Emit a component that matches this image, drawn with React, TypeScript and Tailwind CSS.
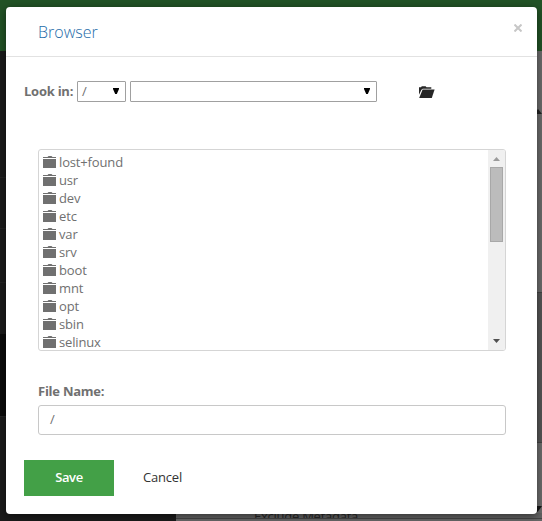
const folders = ['lost+found', 'usr', 'dev', 'etc', 'var', 'srv', 'boot', 'mnt', 'opt', 'sbin', 'selinux'];

function FolderIcon() {
  return (
    <svg className="mr-[3px] h-[12px] w-[13px] shrink-0" viewBox="0 0 13 12" fill="#707070">
      <path d="M0 2V1h4.5L5.5 0h3l1 1H13v1z" />
      <path d="M0 3h13v9H0z" />
    </svg>
  );
}

function OpenFolderIcon() {
  return (
    <svg className="h-[12px] w-[17px]" viewBox="0 0 17 12" fill="#262626">
      <path d="M1 8.8V1.3h2L3.8.3h3.8l.9 1h4.8v1.4H4.8L3.4 3.8z" />
      <path d="M4.6 3.4h12L13.8 12H1.2z" />
    </svg>
  );
}

function Caret({ className }: { className: string }) {
  return (
    <svg className={className} viewBox="0 0 6 6" fill="#000">
      <path d="M0 0h6v1L3.8 6H2.2L0 1z" />
    </svg>
  );
}

function PageBehind() {
  return (
    <div className="flex h-full flex-col">
      <div className="h-[51px] shrink-0 bg-[#225326]" />
      <div className="flex min-h-0 flex-1">
        <div className="flex w-[176px] flex-col bg-[#1b1b1b]">
          <div className="h-[127px] border-b border-[#242424]" />
          <div className="h-[51px] border-b border-[#242424]" />
          <div className="h-[54px] border-b border-[#242424]" />
          <div className="h-[51px]" />
          <div className="h-[83px] border-b border-[#242424] bg-[#0b0b0b]" />
        </div>
        <div className="flex flex-1 flex-col bg-[#6c6c6c]">
          <div className="flex h-[242px] items-start justify-end border-b border-[#444] pt-[57px]">
            <svg className="h-[6px] w-[8px]" viewBox="0 0 8 6" fill="#222">
              <path d="M0 6L4 1l4 5z" />
            </svg>
          </div>
          <div className="h-[150px] border-b border-[#444] bg-[#555]" />
          <div className="flex flex-1 items-end justify-end pb-[1px]">
            <svg className="h-[6px] w-[9px]" viewBox="0 0 9 6" fill="#161616">
              <path d="M0 0h9L4.5 6z" />
            </svg>
          </div>
          <div className="relative h-[6px] shrink-0 overflow-hidden border-b border-[#454545] bg-[#626262]">
            <span className="absolute left-[78px] top-[-4px] whitespace-nowrap text-[13px] leading-[15px] tracking-[-0.25px] text-[#262626]">Exclude Metadata</span>
          </div>
          <div className="h-[2px] shrink-0 bg-[#686868]" />
        </div>
      </div>
    </div>
  );
}

export default function App() {
  return (
    <div className="relative h-[521px] w-[542px] overflow-hidden font-['Open_Sans',sans-serif] text-[13px] text-[#707070]">
      <PageBehind />
      <div className="absolute left-[6px] top-[7px] flex h-[507px] w-[531px] flex-col rounded-[4px] bg-white shadow-[0_2px_8px_rgba(0,0,0,0.5)]">
        <header className="flex h-[50px] shrink-0 items-center justify-between border-b border-[#e2e2e2] pl-[32px] pr-[15px]">
          <h1 className="text-[16px] font-light leading-[20px] text-[#246ba9]">Browser</h1>
          <button aria-label="Close" className="-mt-[7px]">
            <svg className="h-[8px] w-[8px]" viewBox="0 0 8 8" stroke="#c7c7c7" strokeWidth="2">
              <path d="M.5 .5l7 7M7.5 .5l-7 7" />
            </svg>
          </button>
        </header>

        <div className="mt-[24px] flex h-[21px] shrink-0 items-center pl-[18px]">
          <label className="w-[53px] whitespace-nowrap font-bold tracking-[-0.25px]">Look in:</label>
          <div className="flex h-[21px] w-[49px] items-center justify-between rounded-[1px] border border-[#a0a0a0] pl-[4px] pr-[6px]">
            <span>/</span>
            <Caret className="-mt-[2px] h-[6px] w-[6px]" />
          </div>
          <div className="ml-[4px] flex h-[21px] w-[247px] items-center justify-end rounded-[1px] border border-[#a0a0a0] pr-[6px]">
            <Caret className="-mt-[2px] h-[6px] w-[6px]" />
          </div>
          <button aria-label="Open folder" className="ml-[41px] mt-[1px]">
            <OpenFolderIcon />
          </button>
        </div>

        <div className="ml-[32px] mt-[47px] flex h-[202px] w-[468px] shrink-0 overflow-hidden rounded-[3px] border border-[#d5d5d5]">
          <ul className="flex-1 pl-[4px] pt-[3px] tracking-[-0.15px]">
            {folders.map((name) => (
              <li key={name} className="flex h-[18px] items-center leading-[18px]">
                <FolderIcon />
                {name}
              </li>
            ))}
          </ul>
          <div className="flex w-[17px] flex-col items-center bg-[#f0f0f0] pt-[7px]">
            <svg className="h-[4px] w-[7px] shrink-0" viewBox="0 0 7 4" fill="#9b9b9b">
              <path d="M0 4L3.5 0 7 4z" />
            </svg>
            <div className="mt-[6px] h-[75px] w-[13px] shrink-0 border border-[#a8a8a8] bg-[#bcbcbc]" />
            <svg className="mb-[7px] mt-auto h-[4px] w-[7px] shrink-0" viewBox="0 0 7 4" fill="#505050">
              <path d="M0 0h7L3.5 4z" />
            </svg>
          </div>
        </div>

        <label className="ml-[32px] mt-[31px] h-[18px] shrink-0 font-bold leading-[18px] tracking-[-0.25px]">File Name:</label>
        <div className="ml-[32px] mt-[5px] flex h-[30px] w-[468px] shrink-0 items-center rounded-[3px] border border-[#c8c8c8] pl-[11px]">
          /
        </div>

        <div className="mt-[25px] flex h-[36px] shrink-0 items-center pl-[18px]">
          <button className="h-[36px] w-[90px] bg-[#43a047] font-semibold tracking-[-0.4px] text-white">Save</button>
          <button className="ml-[29px] tracking-[-0.2px] text-[#333]">Cancel</button>
        </div>
      </div>
    </div>
  );
}
